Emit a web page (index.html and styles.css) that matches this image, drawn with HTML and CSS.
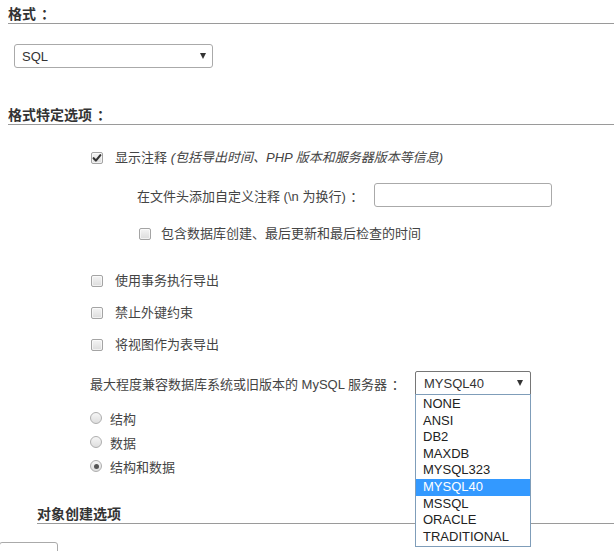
FILE: index.html
```html
<!DOCTYPE html>
<html lang="zh-CN">
<head>
<meta charset="utf-8">
<title>导出</title>
<link rel="stylesheet" href="styles.css">
</head>
<body>
<div class="page">
  <h3 class="sec-title first">格式<span class="colon">：</span></h3>
  <div class="select sel-format"><span>SQL</span><span class="arrow"></span></div>

  <h3 class="sec-title second">格式特定选项<span class="colon">：</span></h3>

  <div class="options">
    <div class="opt opt-first">
      <span class="cb checked"><svg viewBox="0 0 12 12" width="12" height="12"><path d="M2.6 6.2 L4.9 8.6 L9.4 3.2" fill="none" stroke="#333" stroke-width="2.1" stroke-linecap="round" stroke-linejoin="round"/></svg></span>
      <span class="lbl">显示注释 <i>(包括导出时间、PHP 版本和服务器版本等信息)</i></span>
    </div>
    <div class="sub">
      <div class="opt-input">
        <span class="lbl">在文件头添加自定义注释 (\n 为换行)<span class="colon">：</span></span>
        <span class="textbox"></span>
      </div>
      <div class="opt opt-sub">
        <span class="cb"></span>
        <span class="lbl">包含数据库创建、最后更新和最后检查的时间</span>
      </div>
    </div>

    <div class="opt opt-group">
      <span class="cb"></span>
      <span class="lbl">使用事务执行导出</span>
    </div>
    <div class="opt opt-next">
      <span class="cb"></span>
      <span class="lbl">禁止外键约束</span>
    </div>
    <div class="opt opt-next">
      <span class="cb"></span>
      <span class="lbl">将视图作为表导出</span>
    </div>

    <div class="compat">
      <span class="lbl">最大程度兼容数据库系统或旧版本的 MySQL 服务器<span class="colon">：</span></span>
      <div class="select-wrap">
        <div class="select sel-compat open"><span>MYSQL40</span><span class="arrow"></span></div>
        <ul class="dropdown">
          <li>NONE</li>
          <li>ANSI</li>
          <li>DB2</li>
          <li>MAXDB</li>
          <li>MYSQL323</li>
          <li class="active">MYSQL40</li>
          <li>MSSQL</li>
          <li>ORACLE</li>
          <li>TRADITIONAL</li>
        </ul>
      </div>
    </div>

    <div class="radios">
      <div class="radio-row"><span class="rb"></span><span class="lbl">结构</span></div>
      <div class="radio-row"><span class="rb"></span><span class="lbl">数据</span></div>
      <div class="radio-row"><span class="rb checked"></span><span class="lbl">结构和数据</span></div>
    </div>
  </div>

  <h3 class="sub-title">对象创建选项</h3>
  <div class="bottom-box"></div>
</div>
</body>
</html>
```

FILE: styles.css
```css
html, body {
  margin: 0;
  padding: 0;
  background: #fff;
}
body {
  font-family: "Liberation Sans", "Noto Sans CJK SC", sans-serif;
  font-size: 13px;
  color: #444;
  overflow: hidden;
}
.colon {
  padding-left: 0.35em;
  margin-right: -0.35em;
}
.page {
  padding-left: 8px;
}
.sec-title {
  margin: 0;
  font-size: 14px;
  font-weight: bold;
  color: #333;
  line-height: 17px;
  height: 17px;
  border-bottom: 1px solid #9a9a9a;
}
.sec-title.first {
  padding-top: 6px;
}
.sec-title.second {
  margin-top: 39px;
}
.select {
  box-sizing: border-box;
  display: flex;
  align-items: center;
  justify-content: space-between;
  height: 24px;
  border: 1px solid #aaa;
  border-radius: 3px;
  background: #fff;
  padding: 0 6px 0 7px;
  color: #333;
  font-size: 13px;
}
.sel-format {
  margin: 20px 0 0 6px;
  width: 199px;
}
.arrow {
  width: 0;
  height: 0;
  border-left: 3px solid transparent;
  border-right: 3px solid transparent;
  border-top: 6px solid #333;
}
.options {
  padding-left: 83px;
}
.opt {
  display: flex;
  align-items: center;
  height: 18px;
}
.opt-first { margin-top: 24px; }
.opt-sub { margin-top: 18px; }
.opt-group { margin-top: 29px; }
.opt-next { margin-top: 14px; }
.cb {
  box-sizing: border-box;
  width: 12px;
  height: 12px;
  border: 1px solid #a4a4a4;
  border-radius: 2px;
  background: linear-gradient(#f4f4f4, #dcdcdc);
  box-shadow: inset 0 0 0 1px rgba(255,255,255,0.6);
  margin-right: 12px;
  flex: none;
  display: flex;
  align-items: center;
  justify-content: center;
}
.cb svg {
  display: block;
  margin: -1px;
}
.cb + .lbl {
  line-height: 18px;
}
.lbl i {
  font-style: italic;
}
.sub {
  padding-left: 46px;
}
.sub .opt-input {
  margin-top: 16px;
  display: flex;
  align-items: center;
  height: 24px;
}
.opt-input .lbl {
  width: 237px;
}
.textbox {
  box-sizing: border-box;
  width: 178px;
  height: 24px;
  border: 1px solid #aaa;
  border-radius: 3px;
  background: #fff;
}
.sub .opt-sub {
  padding-left: 2px;
}
.sub .opt-sub .cb {
  margin-right: 10px;
}
.compat {
  margin-top: 17px;
  margin-left: -1px;
  display: flex;
  align-items: center;
  height: 24px;
}
.compat .lbl {
  width: 325px;
}
.select-wrap {
  position: relative;
}
.sel-compat {
  width: 116px;
  padding-left: 8px;
  padding-right: 7px;
}
.sel-compat.open {
  border-color: #767676;
  border-radius: 2px 2px 0 0;
}
.dropdown {
  position: absolute;
  top: 23px;
  left: 0;
  box-sizing: border-box;
  width: 116px;
  margin: 0;
  padding: 1px 0 1px;
  list-style: none;
  background: #fff;
  border: 1px solid #7f9db9;
  z-index: 10;
}
.dropdown li {
  height: 16.6px;
  line-height: 16.6px;
  padding-left: 7px;
  color: #222;
  font-size: 13px;
}
.dropdown li.active {
  background: #3399ff;
  color: #fff;
}
.radios {
  margin-top: 14px;
  margin-left: -1px;
}
.radio-row {
  display: flex;
  align-items: center;
  height: 18px;
  margin-bottom: 6px;
}
.rb {
  box-sizing: border-box;
  width: 12px;
  height: 12px;
  border: 1px solid #aeaeae;
  border-radius: 50%;
  background: linear-gradient(#f6f6f6, #dedede);
  margin-right: 8px;
  flex: none;
  display: flex;
  align-items: center;
  justify-content: center;
}
.rb.checked::after {
  content: "";
  width: 5px;
  height: 5px;
  border-radius: 50%;
  background: #555;
}
.sub-title {
  margin: 31px 0 0 29px;
  font-size: 14px;
  font-weight: bold;
  color: #333;
  line-height: 17px;
  height: 17px;
  border-bottom: 1px solid #9a9a9a;
}
.bottom-box {
  box-sizing: border-box;
  margin: 18px 0 0 -9px;
  width: 67px;
  height: 24px;
  border: 1px solid #aaa;
  border-radius: 3px;
}
.bottom-box {
  width: 59px;
}
```
